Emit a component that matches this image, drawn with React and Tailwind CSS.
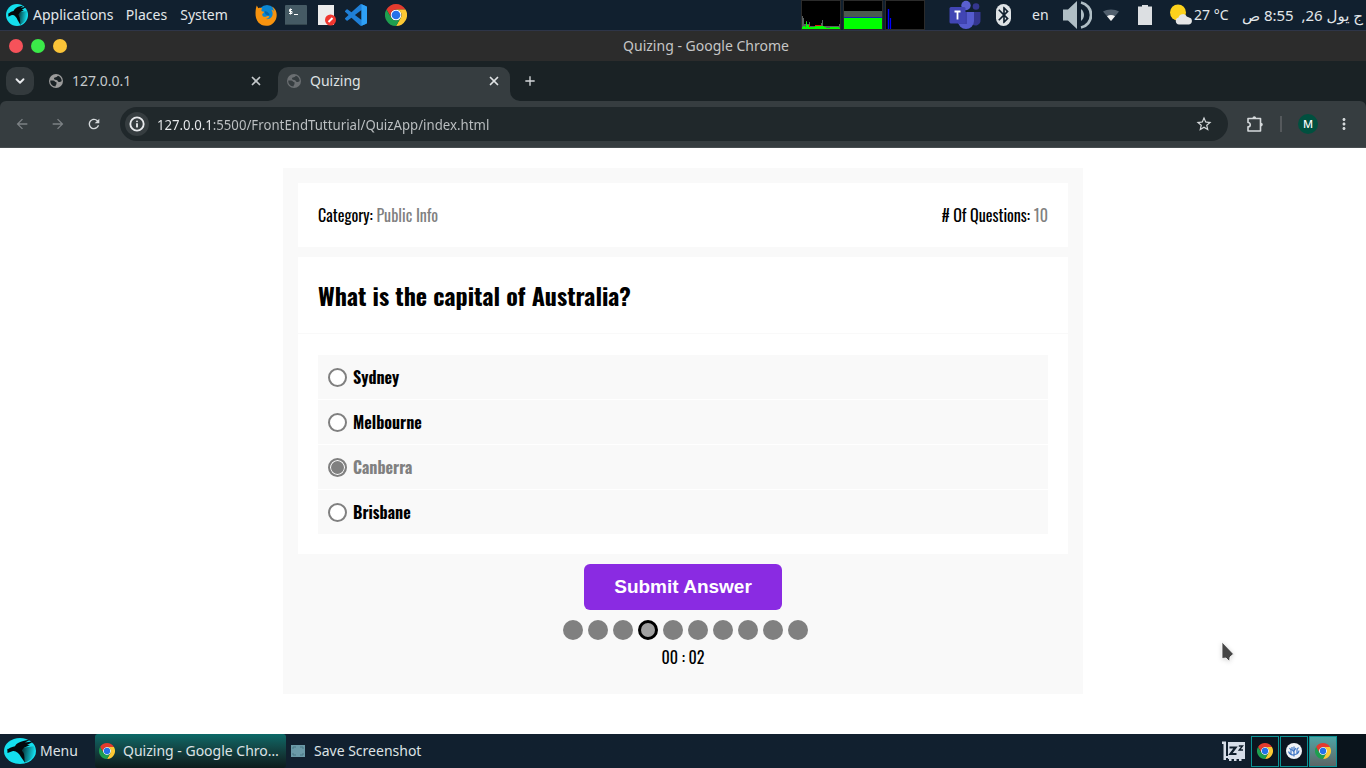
import React, { useState } from "react";
import {
  MdArrowBack,
  MdArrowForward,
  MdRefresh,
  MdStarOutline,
  MdMoreVert,
  MdAdd,
  MdBluetooth,
} from "react-icons/md";
import { ChevronDown, Info, X } from "lucide-react";

function Parrot({ className }) {
  return (
    <svg viewBox="0 0 32 32" preserveAspectRatio="none" className={className} aria-hidden="true">
      <defs>
        <linearGradient id="parrotShade" x1="0" x2="1" y1="0.3" y2="0.5">
          <stop offset="0" stopColor="#04383c" />
          <stop offset="1" stopColor="#14dfee" />
        </linearGradient>
      </defs>
      <circle cx="16" cy="16" r="16" fill="#14dfee" />
      <path d="M18 12 30 10a16 16 0 0 1-9 20Z" fill="url(#parrotShade)" />
      <path d="M3 14.500c2-2 4-3.500 8-4.500C13 6 15 4 26 2l-5 3.500 9-1.500-7 4.500 3 .5-5 2.500c-3 2-3 4-1 8l1 11-4-7c-2-5-5-8-8-7.500-2 .5-3.500 2-5.500 2.500 0-1.500 0-3-.5-6Z" fill="#04090c" />
    </svg>
  );
}

function Chrome({ className }) {
  return (
    <svg viewBox="0 0 48 48" className={className} aria-hidden="true">
      <circle cx="24" cy="24" r="12" fill="#fff" />
      <path d="M24 12H44.78a24 24 0 0 0-41.56 0L13.608 30l.01-.002A11.985 11.985 0 0 1 24 12Z" fill="#e33b2e" />
      <path d="M34.391 30.003 24 48A23.994 23.994 0 0 0 44.78 12.003H24l-.003.01a11.985 11.985 0 0 1 10.394 17.99Z" fill="#fcc934" />
      <path d="M13.609 30.003 3.218 12.006A23.994 23.994 0 0 0 24.003 48l10.39-17.997-.007-.007a11.985 11.985 0 0 1-20.777.007Z" fill="#1e9e4f" />
      <circle cx="24" cy="24" r="9.5" fill="#2472ea" />
    </svg>
  );
}

function Firefox({ className }) {
  return (
    <svg viewBox="0 0 22 22" className={className} aria-hidden="true">
      <circle cx="12" cy="10" r="9" fill="#0a86d1" />
      <path d="M.5 9C.6 6 1 3 1.8 1.500l1.500 2.700c1.300-.6 2.700-.5 4 .1C6.500 5.300 6 6.500 6.800 7.300l2.400.5c0 1.200-1.900 1.700-2 2.700 0 2 2.500 3 4.500 1.800 1.300-.8 2.800-.3 2.600.4-.6 1.300-2 2-3.600 2.300 4 .8 7-1.800 6.900-5.500 0-1.800-.7-2.900-1.300-3.800 1 .2 2 .8 2.600 1.700-.2-2.300-1-4-2.500-5.200 3.400 1.500 5.400 5.200 5.300 8.800A10.700 10.700 0 0 1 11 21.800C5 21.800.2 17 .5 9Z" fill="#f7930f" />
      <path d="M9.500 7.500c1-.4 2-.2 3 .5l2 2c.2 1-1 1.700-2 1.300l-2-1Z" fill="#0565a8" />
    </svg>
  );
}

function Terminal({ className }) {
  return (
    <svg viewBox="0 0 22 20" className={className} aria-hidden="true">
      <rect width="22" height="20" rx="1" fill="#455a64" />
      <rect y="19" width="22" height="1" fill="#34464e" />
      <path d="M7 4.500H4.500v2H7v2H4M5.500 3.500v6M9 9.500h4" fill="none" stroke="#fff" strokeWidth="1" />
    </svg>
  );
}

function Editor({ className }) {
  return (
    <svg viewBox="0 0 19 22" className={className} aria-hidden="true">
      <rect x="1" y="1" width="16" height="20" fill="#ececec" />
      <circle cx="13.500" cy="16" r="5.500" fill="#f0362f" />
      <path d="m11.500 18 4-4" stroke="#fff" strokeWidth="2" />
    </svg>
  );
}

function VsCode({ className }) {
  return (
    <svg viewBox="0 0 24 24" className={className} aria-hidden="true">
      <path d="M23.150 2.587 18.210.210a1.494 1.494 0 0 0-1.705.290l-9.460 8.630-4.120-3.128a.999.999 0 0 0-1.276.057L.327 7.261A1 1 0 0 0 .326 8.740L3.899 12 .326 15.260a1 1 0 0 0 .001 1.479L1.650 17.940a.999.999 0 0 0 1.276.057l4.120-3.128 9.460 8.630a1.492 1.492 0 0 0 1.704.290l4.942-2.377A1.500 1.500 0 0 0 24 20.060V3.939a1.500 1.500 0 0 0-.850-1.352zm-5.146 14.861L10.826 12l7.178-5.448v10.896z" fill="#1f7fd6" />
      <path d="M18 .2 23.150 2.587A1.500 1.500 0 0 1 24 3.939V20.060a1.500 1.500 0 0 1-.850 1.352L18 23.800Z" fill="#2ea0f5" />
    </svg>
  );
}

function CpuGraph({ className }) {
  return (
    <svg viewBox="0 0 40 30" className={className} aria-hidden="true" shapeRendering="crispEdges">
      <rect x="0.500" y="0.500" width="39" height="29" fill="#000" stroke="#2b2b2b" />
      <path d="M1 29V16h1v2h1v6h2v-3h1v3h2v-2h1v4h11v-3h1v-3h1v6h16v-2h1v4Z" fill="#5a5f5f" />
      <path d="M6 25h3v2H6zM14 25h6v1h-6z" fill="#d11" />
      <path d="M1 29v-2h1v-1h2v1h1v-5h1v3h2v2h6v-1h9v1h2v1h4v-1h9v1h1v1Z" fill="#0f0" />
    </svg>
  );
}

function MemoryGraph({ className }) {
  return (
    <svg viewBox="0 0 40 30" className={className} aria-hidden="true" shapeRendering="crispEdges">
      <rect x="0.500" y="0.500" width="39" height="29" fill="#000" stroke="#2b2b2b" />
      <rect x="1" y="11" width="38" height="6" fill="#4c5a50" />
      <rect x="1" y="17" width="38" height="1" fill="#1020c0" />
      <rect x="1" y="18" width="38" height="11" fill="#0f0" />
    </svg>
  );
}

function NetworkGraph({ className }) {
  return (
    <svg viewBox="0 0 40 30" className={className} aria-hidden="true">
      <rect x="0.500" y="0.500" width="39" height="29" fill="#000" stroke="#2b2b2b" />
      <rect x="2.800" y="9" width="1.400" height="20" fill="#00f" />
      <rect x="4.900" y="18" width="1.200" height="11" fill="#00f" />
    </svg>
  );
}

function Teams({ className }) {
  return (
    <svg viewBox="0 0 32 30" className={className} aria-hidden="true">
      <circle cx="27" cy="6.500" r="3.300" fill="#34368f" />
      <path d="M23 12h8.500v8a5 5 0 0 1-8.500 4Z" fill="#34368f" />
      <circle cx="17" cy="5.500" r="4.700" fill="#5a60d0" />
      <path d="M9 12h16v9a8 8 0 0 1-16 0Z" fill="#555bce" />
      <path d="M9 12h9v12H9z" fill="#3f43ab" />
      <rect x="0.500" y="7" width="16" height="16.500" rx="1.500" fill="#4145b4" />
      <path d="M5.500 11.500h6M8.500 11.500v8" stroke="#fff" strokeWidth="1.800" />
    </svg>
  );
}

function Volume({ className }) {
  return (
    <svg viewBox="0 0 30 28" className={className} aria-hidden="true" fill="#b0bec5">
      <path d="M1 8.500h5L15 0v28l-9-8.500H1Z" />
      <path d="M19 8a7.500 7.500 0 0 1 0 12Z" />
      <path d="M19 1.500a12.800 12.800 0 0 1 0 25" fill="none" stroke="#b0bec5" strokeWidth="2.800" />
    </svg>
  );
}

function Wifi({ className }) {
  return (
    <svg viewBox="0 0 16 12" className={className} aria-hidden="true">
      <path d="M8 12 0 2.500C4-.3 12-.3 16 2.500Z" fill="#52606e" />
      <path d="M8 12 4 7.200c2.500-1.600 5.500-1.600 8 0Z" fill="#f2f2f2" />
    </svg>
  );
}

function Battery({ className }) {
  return (
    <svg viewBox="0 0 14 20" className={className} aria-hidden="true" fill="#dcdfe2">
      <path d="M4 0h6v1.500h4V20H0V1.500h4Z" />
    </svg>
  );
}

function Weather({ className }) {
  return (
    <svg viewBox="0 0 22 22" className={className} aria-hidden="true">
      <circle cx="8" cy="8.500" r="8" fill="#fdd21c" />
      <path d="M9 20.500a3.500 3.500 0 0 1-.5-6.900 4.500 4.500 0 0 1 8.500-.8 3.500 3.500 0 0 1 2 .8 3.500 3.500 0 0 1 0 6.900Z" fill="#e6e6e6" />
    </svg>
  );
}

function Globe({ className, land }) {
  return (
    <svg viewBox="0 0 14 14" className={className} aria-hidden="true">
      <circle cx="7" cy="7" r="7" fill="currentColor" />
      <path d="M1.300 6.500H4c2 0 2 1.800 3.500 1.800v1.500C7.500 11 6.500 11 6.500 12.600 3 12.300 1 9.500 1.300 6.500Z" fill={land} />
      <path d="M9 1.700c2.200.8 3.600 2.700 3.700 5.300-.7.900-1.700 1-2.700 1C8.500 8 9 6 7.200 6 5.500 6 5 5.500 5 4.300 5 3 6.800 3.700 7.500 3Z" fill={land} />
    </svg>
  );
}

function Puzzle({ className }) {
  return (
    <svg viewBox="0 0 18 18" className={className} aria-hidden="true" fill="none" stroke="currentColor" strokeWidth="1.600">
      <path d="M2 3.500h12.500v12.500H2v-4.200c3 0 3-4.300 0-4.300V3.500Z" strokeLinejoin="round" />
      <path d="M6.500 3a1.800 1.800 0 0 1 3.600 0ZM15 7.800a1.800 1.800 0 0 1 0 3.600Z" fill="currentColor" stroke="none" />
    </svg>
  );
}

function Sleeper({ className }) {
  return (
    <svg viewBox="0 0 24 22" className={className} aria-hidden="true">
      <path d="M0 1.500h4V20H1.500V4H0ZM6 2h17v17H6z" fill="#d6dde8" />
      <path d="M7 19h2.500v2H7zM12 19h2.500v2H12zM17 19h2.500v2H17z" fill="#d6dde8" />
      <path d="M4 16h3v2H4z" fill="#d6dde8" />
      <path d="M7.500 7.500h6L8.500 14h6" fill="none" stroke="#101e2c" strokeWidth="2.200" />
      <path d="M16.800 6h3.700l-3.200 4H21" fill="none" stroke="#101e2c" strokeWidth="1.400" />
    </svg>
  );
}

function Coral({ className }) {
  return (
    <svg viewBox="0 0 16 16" className={className} aria-hidden="true">
      <circle cx="8" cy="8" r="8" fill="#f0f3f7" />
      <path d="M8 13.500V3.500M8 12C5 12 3.500 11 2.500 8.500M5 11.500V7L3.500 5M8 11.500c3 0 4.500-1 5-4M11 10.500V6.500L12.500 4.500M8 8l2-3M8 9 6 6.500V4" fill="none" stroke="#3f76c4" strokeWidth="1.200" />
    </svg>
  );
}

function TopPanel() {
  return (
    <header className="flex h-[31px] items-center border-b border-[#2e3548] bg-[#11202f] pr-[3px] pl-[6px] text-sm text-[#e3e7ea]">
      <nav className="flex items-center" aria-label="Desktop">
        <button type="button" className="flex w-[107px] items-center gap-[5px]">
          <Parrot className="size-[22px] shrink-0" />
          Applications
        </button>
        <button type="button" className="ml-3 w-[43px]">Places</button>
        <button type="button" className="ml-3 w-[48px]">System</button>
      </nav>
      <div className="ml-[27px] flex items-center">
        <button type="button" aria-label="Firefox"><Firefox className="size-[22px]" /></button>
        <button type="button" aria-label="Terminal" className="ml-2"><Terminal className="h-5 w-[22px]" /></button>
        <button type="button" aria-label="Text editor" className="ml-[10px]"><Editor className="h-[22px] w-[19px]" /></button>
        <button type="button" aria-label="Code" className="ml-[9px]"><VsCode className="size-[22px]" /></button>
        <button type="button" aria-label="Chrome" className="ml-[18px]"><Chrome className="size-[22px]" /></button>
      </div>
      <div className="ml-auto flex items-center">
        <div className="flex gap-[2px]">
          <CpuGraph className="h-[30px] w-10" />
          <MemoryGraph className="h-[30px] w-10" />
          <NetworkGraph className="h-[30px] w-10" />
        </div>
        <Teams className="ml-6 h-[30px] w-8" />
        <span className="ml-[15px] flex h-[22px] w-[15px] items-center justify-center rounded-full bg-[#dfe3e6] text-[#11202f]">
          <MdBluetooth className="size-5 shrink-0" />
        </span>
        <span className="ml-[21px] w-4">en</span>
        <Volume className="ml-[14px] h-7 w-[30px]" />
        <Wifi className="ml-[11px] h-3 w-4" />
        <Battery className="ml-[19px] h-5 w-[14px]" />
        <Weather className="ml-[18px] size-[22px]" />
        <span className="ml-[2px] w-9 whitespace-nowrap">27 °C</span>
        <time dir="rtl" lang="ar" className="ml-[11px] w-[122px] text-[15px] leading-5 whitespace-pre">{"ج يول 26,  8:55 ص"}</time>
      </div>
    </header>
  );
}

function TitleBar() {
  return (
    <div className="grid h-[30px] grid-cols-[1fr_auto_1fr] items-center bg-[#2c2c2c] text-sm text-[#c6c6c6]">
      <div className="flex gap-2 pl-[9px]">
        <button type="button" aria-label="Close window" className="size-[14px] rounded-full bg-[#f6525a]" />
        <button type="button" aria-label="Maximize window" className="size-[14px] rounded-full bg-[#3bea49]" />
        <button type="button" aria-label="Minimize window" className="size-[14px] rounded-full bg-[#fbc438]" />
      </div>
      <h1 className="pl-[46px]">Quizing - Google Chrome</h1>
    </div>
  );
}

function TabStrip() {
  return (
    <div className="flex h-10 items-end bg-[#1a2225] text-sm text-[#c4c9cb]">
      <button type="button" aria-label="Search tabs" className="mb-[6px] ml-[6px] flex size-7 items-center justify-center rounded-[10px] bg-[#333a3d] text-[#e8eaed]">
        <ChevronDown className="size-[14px]" strokeWidth={3.2} />
      </button>
      <div className="flex h-[34px] w-[234px] items-center pb-[6px] pl-[15px]">
        <Globe className="size-[14px] text-[#9b9b9b]" land="#1a2225" />
        <button type="button" className="ml-[9px] flex-1 text-left">127.0.0.1</button>
        <button type="button" aria-label="Close tab" className="mr-[5px]"><X className="size-[14px]" strokeWidth={3} /></button>
      </div>
      <span className="size-[10px] bg-[#363d40]"><span className="block size-full rounded-br-[10px] bg-[#1a2225]" /></span>
      <div className="flex h-[34px] w-[232px] items-center rounded-t-[10px] bg-[#363d40] pb-[6px] pl-[9px] text-[#dfe2e4]">
        <Globe className="size-[14px] text-[#6b6f72]" land="#363d40" />
        <button type="button" className="ml-[9px] flex-1 text-left">Quizing</button>
        <button type="button" aria-label="Close tab" className="mr-[9px]"><X className="size-[14px]" strokeWidth={3} /></button>
      </div>
      <span className="size-[10px] bg-[#363d40]"><span className="block size-full rounded-bl-[10px] bg-[#1a2225]" /></span>
      <button type="button" aria-label="New tab" className="mb-3 ml-[2px] text-[#d5d8da]"><MdAdd className="size-4" /></button>
    </div>
  );
}

function Toolbar() {
  return (
    <div className="bg-[#1a2225]">
      <div className="flex h-[47px] items-center rounded-t-[6px] border-b border-[#474d50] bg-[#363d40] pr-[13px] pl-[14px] text-[#d5d9db]">
        <button type="button" aria-label="Back" className="text-[#7c8184]"><MdArrowBack className="size-4" /></button>
        <button type="button" aria-label="Forward" className="ml-5 text-[#7c8184]"><MdArrowForward className="size-4" /></button>
        <button type="button" aria-label="Reload" className="ml-5"><MdRefresh className="size-4" /></button>
        <div className="ml-[18px] flex h-[34px] flex-1 items-center rounded-full bg-[#20282b] pr-[15px] pl-[5px]">
          <button type="button" aria-label="Site information" className="flex size-6 items-center justify-center rounded-full bg-[#363d40] text-[#e8eaed]">
            <Info className="size-4" strokeWidth={2.8} />
          </button>
          <input
            aria-label="Address"
            defaultValue="127.0.0.1:5500/FrontEndTutturial/QuizApp/index.html"
            className="ml-2 h-8 flex-1 bg-[linear-gradient(90deg,#e8eaed_54px,#bcc0c2_54px)] bg-clip-text font-['Noto_Sans_Display','Noto_Sans',sans-serif] text-sm text-transparent outline-none"
          />
          <button type="button" aria-label="Bookmark"><MdStarOutline className="size-[18px]" /></button>
        </div>
        <button type="button" aria-label="Extensions" className="ml-[18px]"><Puzzle className="size-[18px]" /></button>
        <span className="ml-4 h-4 w-[2px] bg-[#55595c]" />
        <button type="button" aria-label="Profile" className="ml-4 flex size-5 items-center justify-center rounded-full bg-[#00503f] text-[11px] font-medium text-white">M</button>
        <button type="button" aria-label="Browser menu" className="ml-[17px]"><MdMoreVert className="size-[18px]" /></button>
      </div>
    </div>
  );
}

const answers = ["Sydney", "Melbourne", "Canberra", "Brisbane"];

function Quiz() {
  const [picked, setPicked] = useState("Canberra");
  return (
    <main className="flex-1 bg-white pt-5 font-[Oswald,'Liberation_Sans_Narrow','Roboto_Condensed',sans-serif] text-base text-black">
      <form className="mx-auto max-w-[800px] bg-[#f9f9f9] p-[15px]" onSubmit={(e) => e.preventDefault()}>
        <div className="flex justify-between bg-white p-5 leading-6">
          <p>Category: <span className="text-[#808080]">Public Info</span></p>
          <p># Of Questions: <span className="text-[#808080]">10</span></p>
        </div>
        <fieldset aria-labelledby="question" className="mt-[10px] bg-white">
          <h2 id="question" className="border-b border-[#f9f9f9] p-5 text-2xl leading-9 font-bold">What is the capital of Australia?</h2>
          <div className="flex flex-col gap-px p-5 pt-[21px]">
            {answers.map((a) => (
              <label key={a} className="flex h-11 items-center gap-[6px] bg-[#f9f9f9] pl-[10px] font-bold has-checked:text-[#808080]">
                <input
                  type="radio"
                  name="answer"
                  checked={picked === a}
                  onChange={() => setPicked(a)}
                  className="size-[19px] appearance-none rounded-full border-2 border-[#808080] bg-white checked:bg-[#808080] checked:shadow-[inset_0_0_0_1px_#fff]"
                />
                {a}
              </label>
            ))}
          </div>
        </fieldset>
        <button type="submit" className="mx-auto mt-[10px] block h-[46px] rounded-md bg-[#8a2be2] px-[30px] font-['Liberation_Sans',Arial,sans-serif] text-[19px] font-bold text-white">
          Submit Answer
        </button>
        <div className="mt-[10px] flex justify-center gap-[5px] pl-[5px]">
          {Array.from({ length: 10 }, (_, i) => (
            <span key={i} className={i === 3 ? "size-5 rounded-full border-[3px] border-black bg-[#a0a0a0]" : "size-5 rounded-full bg-[#808080]"} />
          ))}
        </div>
        <p className="mt-[5px] mb-[10px] text-center leading-6">00 : 02</p>
      </form>
    </main>
  );
}

function Taskbar() {
  return (
    <footer className="flex h-[34px] items-center bg-linear-to-r from-[#11202f] from-90% to-[#0a141c] to-98% pr-[29px] pl-1 text-sm text-[#dde2e5]">
      <button type="button" className="flex w-[91px] items-center gap-1">
        <Parrot className="h-[26px] w-8" />
        Menu
      </button>
      <button type="button" className="flex h-[34px] w-[191px] items-center rounded-[3px] bg-linear-to-b from-[#0b6a68] to-[#0d1b1c] pl-1 whitespace-nowrap">
        <Chrome className="size-4 shrink-0" />
        <span className="ml-2">Quizing - Google Chro…</span>
      </button>
      <button type="button" className="ml-[5px] flex items-center gap-[9px]">
        <svg viewBox="0 0 14 12" className="h-3 w-[14px]" aria-hidden="true">
          <rect width="14" height="12" fill="#6b9aa8" />
          <path d="M2 4V2h3M9 2h3v2M12 8v2H9M5 10H2V8" fill="none" stroke="#4b7886" />
        </svg>
        Save Screenshot
      </button>
      <div className="ml-auto flex items-center gap-px">
        <Sleeper className="mr-1 h-[22px] w-6" />
        <button type="button" aria-label="Workspace 1" className="flex h-[31px] w-7 items-center justify-center border border-[#0b9294] bg-[#0b1520]"><Chrome className="size-4" /></button>
        <button type="button" aria-label="Workspace 2" className="flex h-[31px] w-7 items-center justify-center border border-[#0b9294] bg-[#0b1520]"><Coral className="size-4" /></button>
        <button type="button" aria-label="Workspace 3" className="flex h-[31px] w-7 items-center justify-center border border-[#0b9294] bg-linear-to-b from-[#4ca5a5] to-[#5b6565]"><Chrome className="size-4" /></button>
      </div>
    </footer>
  );
}

export default function App() {
  return (
    <div className="relative flex min-h-screen flex-col font-['Noto_Sans','DejaVu_Sans',sans-serif]">
      <TopPanel />
      <TitleBar />
      <TabStrip />
      <Toolbar />
      <Quiz />
      <Taskbar />
      <svg viewBox="0 0 14 22" className="pointer-events-none absolute top-[641px] left-[1221px] h-[22px] w-[14px] drop-shadow-sm" aria-hidden="true">
        <path d="M1 1v16.500l4-.5 3.500 3.500L9 16l3.500-3Z" fill="#464646" stroke="#fff" strokeWidth="0.800" />
      </svg>
    </div>
  );
}
